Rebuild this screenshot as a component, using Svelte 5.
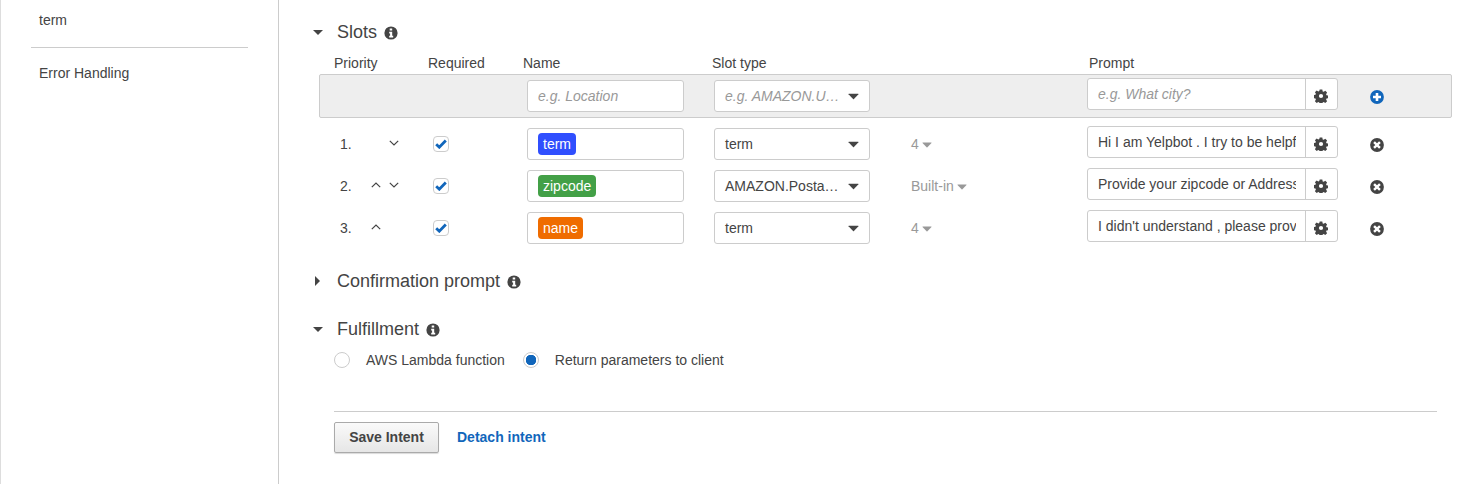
<script>
  const slots = [
    { n: 1, up: false, down: true, name: "term", color: "#304ffe", type: "term", version: "4", prompt: "Hi I am Yelpbot . I try to be helpful" },
    { n: 2, up: true, down: true, name: "zipcode", color: "#43a047", type: "AMAZON.Posta…", version: "Built-in", prompt: "Provide your zipcode or Address" },
    { n: 3, up: true, down: false, name: "name", color: "#ef6c00", type: "term", version: "4", prompt: "I didn't understand , please provide" }
  ]

  let fulfillment = "client"
</script>

{#snippet info()}
  <svg class="info" viewBox="0 0 14 14">
    <circle cx="7" cy="7" r="6.6" fill="#444" />
    <path d="M5.7 2.6h2.500v2H5.700zM5.200 5.700h3v4h1v1.700H5.200V9.700h.9V7.400h-.9z" fill="#fff" />
  </svg>
{/snippet}

{#snippet caret()}
  <svg class="caret" viewBox="0 0 10 6"><path d="M.8.4h8.400q.6 0 .3.5L5.400 5.300q-.4.4-.8 0L.5.9Q.2.4.8.4z" /></svg>
{/snippet}

{#snippet gear()}
  <svg class="gear" viewBox="0 0 14 14">
    <path
      fill-rule="evenodd"
      d="M5.700.5h2.600l.4 1.900 1 .4 1.600-1 1.800 1.800-1 1.600.4 1 1.900.4v2.600l-1.900.4-.4 1 1 1.600-1.800 1.800-1.600-1-1 .4-.4 1.900H5.700l-.4-1.900-1-.4-1.600 1-1.800-1.800 1-1.600-.4-1-1.900-.4V6.200l1.900-.4.4-1-1-1.600 1.800-1.800 1.600 1 1-.4zM7 4.900a2.100 2.100 0 1 0 0 4.200 2.100 2.100 0 0 0 0-4.200z"
    />
  </svg>
{/snippet}

{#snippet chevron(dir)}
  <svg class="chevron" class:up={dir === "up"} viewBox="0 0 10 6">
    <path d={dir === "up" ? "M.8 5.200 5 1l4.200 4.200" : "M.8.8 5 5 9.200.8"} />
  </svg>
{/snippet}

<div class="page">
  <aside class="sidebar">
    <div class="side-item first">term</div>
    <hr />
    <div class="side-item">Error Handling</div>
  </aside>

  <main class="content">
    <section class="slots">
      <h2>
        <span class="toggle down"></span>
        Slots
        {@render info()}
      </h2>

      <div class="table-head">
        <span>Priority</span>
        <span>Required</span>
        <span>Name</span>
        <span>Slot type</span>
        <span>Prompt</span>
      </div>

      <div class="row new">
        <div></div>
        <div></div>
        <div class="field placeholder">e.g. Location</div>
        <div class="field select placeholder">
          <span>e.g. AMAZON.U…</span>
          {@render caret()}
        </div>
        <div></div>
        <div class="prompt">
          <div class="prompt-text placeholder"><span>e.g. What city?</span></div>
          <button class="gear-btn" aria-label="Settings">{@render gear()}</button>
        </div>
        <svg class="action" viewBox="0 0 14 14">
          <circle cx="7" cy="7" r="6.900" fill="#1166bb" />
          <path d="M5.700 3h2.600v2.700H11v2.600H8.300V11H5.700V8.300H3V5.700h2.700z" fill="#fff" />
        </svg>
      </div>

      {#each slots as slot}
        <div class="row">
          <div class="priority">
            <span class="num">{slot.n}.</span>
            <span class="arrow">{#if slot.up}{@render chevron("up")}{/if}</span>
            <span class="arrow">{#if slot.down}{@render chevron("down")}{/if}</span>
          </div>
          <div class="check-cell">
            <span class="check">
              <svg viewBox="0 0 12 10"><path d="M1.200 5.200 4.300 8.200 10.800 1.500" /></svg>
            </span>
          </div>
          <div class="field"><span class="badge" style="background: {slot.color}">{slot.name}</span></div>
          <div class="field select">
            <span>{slot.type}</span>
            {@render caret()}
          </div>
          <div class="version">{slot.version} {@render caret()}</div>
          <div class="prompt">
            <div class="prompt-text"><span>{slot.prompt}</span></div>
            <button class="gear-btn" aria-label="Settings">{@render gear()}</button>
          </div>
          <svg class="action" viewBox="0 0 14 14">
            <circle cx="7" cy="7" r="6.900" fill="#444" />
            <path d="M4.900 3.200 7 5.300l2.100-2.100 1.700 1.700L8.700 7l2.100 2.100-1.700 1.700L7 8.700l-2.100 2.100-1.700-1.700L5.300 7 3.200 4.900z" fill="#fff" />
          </svg>
        </div>
      {/each}
    </section>

    <section class="confirmation">
      <h2>
        <span class="toggle right"></span>
        Confirmation prompt
        {@render info()}
      </h2>
    </section>

    <section class="fulfillment">
      <h2>
        <span class="toggle down"></span>
        Fulfillment
        {@render info()}
      </h2>
      <div class="radios">
        <button class="radio-btn" onclick={() => (fulfillment = "lambda")}>
          <span class="radio" class:on={fulfillment === "lambda"}></span>
          AWS Lambda function
        </button>
        <button class="radio-btn" onclick={() => (fulfillment = "client")}>
          <span class="radio" class:on={fulfillment === "client"}></span>
          Return parameters to client
        </button>
      </div>
    </section>

    <footer class="actions">
      <button class="save">Save Intent</button>
      <span class="detach">Detach intent</span>
    </footer>
  </main>
</div>

<style>
  :global(body) {
    background: #fff;
  }
  .page {
    display: flex;
    height: 484px;
    font-family: "Liberation Sans", Arial, sans-serif;
    font-size: 14px;
    color: #444;
  }
  .sidebar {
    width: 277px;
    flex-shrink: 0;
    border-left: 1px solid #ddd;
    border-right: 1px solid #ccc;
    padding-top: 12px;
  }
  .side-item {
    padding-left: 38px;
    line-height: 17px;
  }
  .side-item.first {
    height: 35px;
  }
  .sidebar hr {
    margin: 0 30px 17px 30px;
    border: 0;
    border-top: 1px solid #ccc;
  }
  .content {
    flex: 1;
    padding-top: 21px;
  }
  h2 {
    display: flex;
    align-items: center;
    margin: 0;
    padding-left: 58px;
    height: 22px;
    font-size: 18px;
    font-weight: 400;
    line-height: 22px;
    position: relative;
    gap: 7px;
  }
  .toggle {
    position: absolute;
    width: 0;
    height: 0;
  }
  .toggle.down {
    left: 34px;
    top: 9px;
    border-left: 5.500px solid transparent;
    border-right: 5.500px solid transparent;
    border-top: 5.500px solid #444;
  }
  .toggle.right {
    left: 36px;
    top: 6px;
    border-top: 5.500px solid transparent;
    border-bottom: 5.500px solid transparent;
    border-left: 5.500px solid #444;
  }
  .info {
    width: 14px;
    height: 14px;
    margin-top: 1px;
  }
  .table-head {
    display: grid;
    grid-template-columns: 94px 95px 189px 377px 1fr;
    padding: 0 0 0 55px;
    height: 21px;
    margin-top: 10px;
    line-height: 20px;
  }
  .row {
    display: grid;
    grid-template-columns: 109px 99px 187px 197px 176px 283px 1fr;
    align-items: center;
    margin-left: 40px;
    width: 1133px;
    height: 32px;
    margin-bottom: 10px;
    box-sizing: border-box;
  }
  .row.new {
    height: 44px;
    background: #eee;
    border: 1px solid #ccc;
    border-radius: 2px;
    grid-template-columns: 108px 99px 187px 197px 176px 283px 1fr;
  }
  .field {
    display: flex;
    align-items: center;
    box-sizing: border-box;
    height: 32px;
    width: 157px;
    padding: 0 10px;
    background: #fff;
    border: 1px solid #ccc;
    border-radius: 3px;
  }
  .select {
    width: 156px;
    justify-content: space-between;
    padding-right: 10px;
  }
  .select .caret {
    width: 11px;
    height: 7px;
    fill: #444;
  }
  .placeholder {
    color: #999;
    font-style: italic;
  }
  .badge {
    display: inline-block;
    height: 22px;
    line-height: 22px;
    padding: 0 5px;
    border-radius: 4px;
    color: #fff;
  }
  .priority {
    display: grid;
    grid-template-columns: 27px 18px 18px;
    align-items: center;
    padding-left: 21px;
  }
  .num {
    line-height: 17px;
  }
  .arrow {
    display: flex;
    justify-content: center;
    margin-top: -3px;
  }
  .chevron {
    width: 10px;
    height: 6px;
    fill: none;
    stroke: #444;
    stroke-width: 1.200;
  }
  .chevron.up {
    margin-top: 1px;
  }
  .check-cell {
    padding-left: 5px;
    display: flex;
  }
  .check {
    display: flex;
    align-items: center;
    justify-content: center;
    box-sizing: border-box;
    width: 16px;
    height: 16px;
    border: 1px solid #ccc;
    border-radius: 4px;
    background: #fff;
  }
  .check svg {
    width: 12px;
    height: 10px;
    fill: none;
    stroke: #1166bb;
    stroke-width: 2.800;
  }
  .version {
    color: #999;
    display: flex;
    align-items: center;
    gap: 3px;
  }
  .version .caret {
    width: 10px;
    height: 6px;
    fill: #999;
    margin-top: 1px;
  }
  .prompt {
    display: flex;
    width: 251px;
    height: 32px;
    box-sizing: border-box;
    margin-top: -4px;
    background: #fff;
    border: 1px solid #ccc;
    border-radius: 3px;
  }
  .prompt-text {
    flex: 1;
    min-width: 0;
    padding: 0 9px 0 10px;
    line-height: 30px;
  }
  .prompt-text span {
    display: block;
    overflow: hidden;
    white-space: nowrap;
  }
  .gear-btn {
    width: 32px;
    padding: 0 2px 0 0;
    border: 0;
    border-left: 1px solid #ccc;
    background: none;
    display: flex;
    align-items: center;
    justify-content: center;
  }
  .gear {
    width: 14px;
    height: 14px;
    margin-top: 4px;
    fill: #444;
  }
  .action {
    width: 14px;
    height: 14px;
    margin-top: 2px;
  }
  .confirmation {
    margin-top: 26px;
  }
  .fulfillment {
    margin-top: 26px;
  }
  .radios {
    display: flex;
    padding-left: 55px;
    margin-top: 10px;
    gap: 18px;
  }
  .radio-btn {
    display: flex;
    align-items: center;
    gap: 16px;
    padding: 0;
    border: 0;
    background: none;
    font: inherit;
    color: inherit;
    height: 20px;
  }
  .radio {
    box-sizing: border-box;
    width: 16px;
    height: 16px;
    border: 1px solid #ccc;
    border-radius: 50%;
    background: #fff;
  }
  .radio.on {
    background: radial-gradient(circle, #1166bb 0 5px, #fff 5.500px);
  }
  .actions {
    display: flex;
    align-items: center;
    margin: 41px 29px 0 55px;
    padding-top: 10px;
    border-top: 1px solid #ccc;
    gap: 18px;
  }
  .save {
    box-sizing: border-box;
    width: 105px;
    height: 31px;
    padding: 0 0 2px;
    font: bold 14px "Liberation Sans", Arial, sans-serif;
    color: #444;
    border: 1px solid #aaa;
    border-radius: 2px;
    background: linear-gradient(#fafafa, #e6e6e6);
    box-shadow: 0 1px 1px rgba(0, 0, 0, 0.15);
  }
  .detach {
    color: #1166bb;
    font-weight: 700;
    margin-top: -2px;
  }
</style>
